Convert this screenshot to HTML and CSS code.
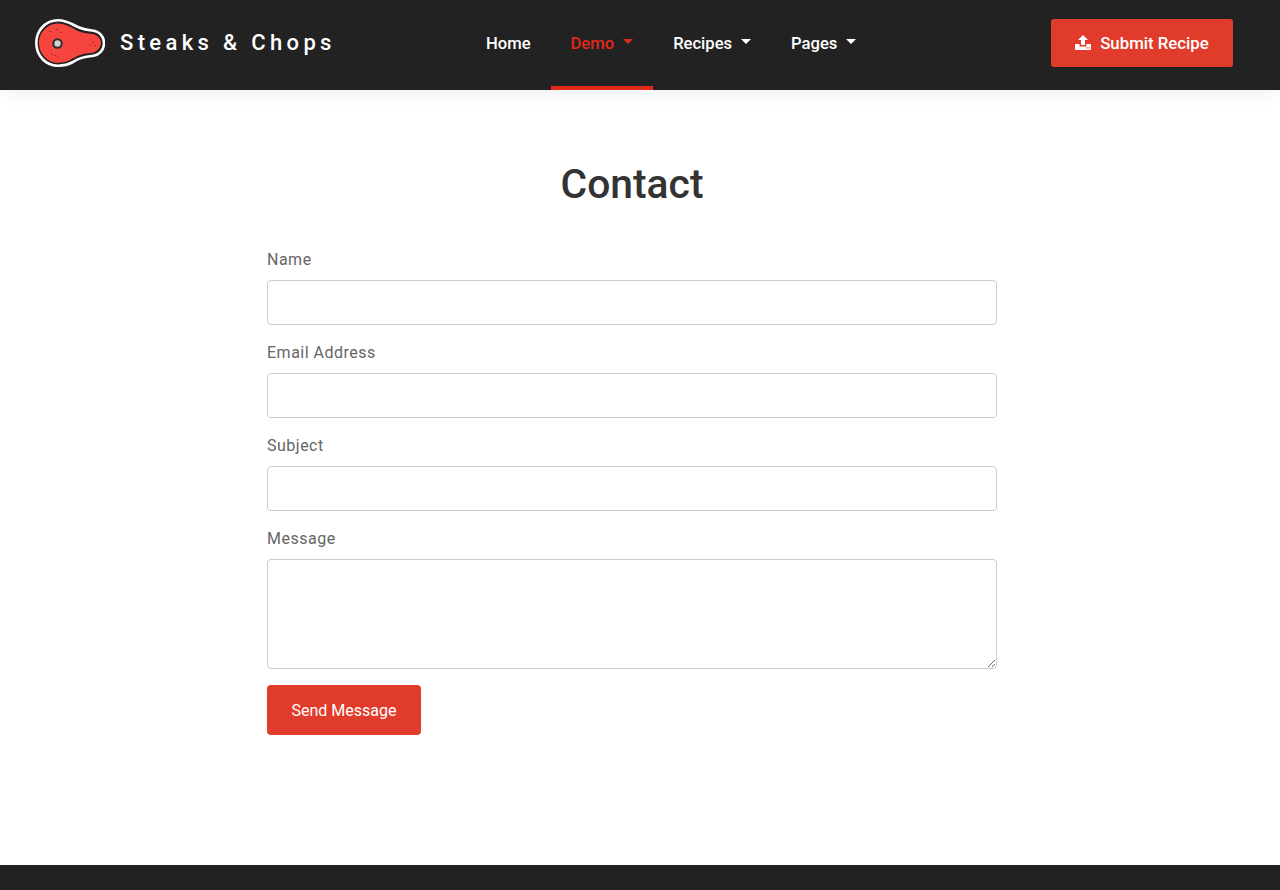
FILE: index.html
```html
<!DOCTYPE html>
<html lang="en">
<head>
<meta charset="utf-8">
<title>Contact - Steaks &amp; Chops</title>
<link rel="stylesheet" href="styles.css">
</head>
<body>
<header class="site-header">
  <a class="brand" href="#">
    <svg class="brand-logo" viewBox="0 0 70 48" width="70" height="48" aria-hidden="true">
      <path class="logo-outer" d="M1.300 24C1.300 11 11 1.300 23 1.300C32 1.300 37 5.500 44 8.500C48 10.200 52 11 57 11.500C65 12.300 69 18 69 24C69 31 64 36.500 57 37C50 37.500 44 39 38 43C33 45.700 28 46.700 23 46.700C11 46.700 1.300 37 1.300 24Z"/>
      <path class="logo-meat" d="M4 24C4 13 13 4.500 23 4.500C31 4.500 36 8.500 43 12C47 14 52 14.500 57 15C62 15.500 66 19.500 66 24C66 29 61 33.500 56 34C49 34.500 43 36 36 40.500C32 42.800 28 43.800 23 43.800C13 43.800 4 35 4 24Z"/>
      <circle class="logo-bone" cx="22.500" cy="24.500" r="4.200"/>
      <g class="logo-dots">
        <circle cx="15" cy="12.500" r=".6"/><circle cx="22" cy="10.500" r=".6"/><circle cx="26" cy="13.500" r=".6"/>
        <circle cx="17" cy="35" r=".6"/><circle cx="20" cy="36.500" r=".6"/><circle cx="23" cy="38" r=".6"/>
        <circle cx="58" cy="23" r=".6"/><circle cx="55" cy="26" r=".6"/><circle cx="60" cy="26.500" r=".6"/>
      </g>
    </svg>
    <span class="brand-name">Steaks &amp; Chops</span>
  </a>
  <nav class="main-nav">
    <a class="nav-link" href="#">Home</a>
    <a class="nav-link is-active has-caret" href="#">Demo</a>
    <a class="nav-link has-caret" href="#">Recipes</a>
    <a class="nav-link has-caret" href="#">Pages</a>
  </nav>
  <a class="submit-btn" href="#">
    <svg class="submit-icon" viewBox="0 0 16 15" width="16" height="15" aria-hidden="true">
      <path d="M8 0L13 5H10V10H6V5H3Z"/>
      <path fill-rule="evenodd" d="M1 9H4.500V11.500H11.500V9H15C15.600 9 16 9.400 16 10V14C16 14.600 15.600 15 15 15H1C.4 15 0 14.600 0 14V10C0 9.400 .4 9 1 9ZM11.500 12.300H12.700V13.500H11.500ZM13.500 12.300H14.700V13.500H13.500Z"/>
    </svg>
    Submit Recipe
  </a>
</header>

<main class="content">
  <h1 class="page-title">Contact</h1>
  <form class="contact-form">
    <div class="field">
      <label class="field-label" for="name">Name</label>
      <input class="field-input" id="name" type="text">
    </div>
    <div class="field">
      <label class="field-label" for="email">Email Address</label>
      <input class="field-input" id="email" type="text">
    </div>
    <div class="field">
      <label class="field-label" for="subject">Subject</label>
      <input class="field-input" id="subject" type="text">
    </div>
    <div class="field">
      <label class="field-label" for="message">Message</label>
      <textarea class="field-input field-textarea" id="message"></textarea>
    </div>
    <button class="send-btn" type="button">Send Message</button>
  </form>
</main>

<footer class="site-footer"></footer>
</body>
</html>
```

FILE: styles.css
```css
* {
  box-sizing: border-box;
}

html,
body {
  height: 100%;
}

body {
  margin: 0;
  display: flex;
  flex-direction: column;
  background: #fff;
  font-family: Roboto, "Liberation Sans", sans-serif;
  overflow: hidden;
}

a {
  text-decoration: none;
}

.site-header {
  position: relative;
  display: flex;
  align-items: center;
  flex: 0 0 90px;
  padding: 0 47px 0 35px;
  background: #222;
  box-shadow: 0 4px 16px rgba(0, 0, 0, .06);
}

.brand {
  display: flex;
  align-items: center;
  gap: 15px;
  flex: 0 0 431px;
  margin-top: -4px;
}

.brand-logo {
  display: block;
}

.logo-outer {
  fill: #222;
  stroke: #fff;
  stroke-width: 2.600;
}

.logo-meat {
  fill: #f6443f;
}

.logo-bone {
  fill: #d0d0d0;
  stroke: #2a2a2a;
  stroke-width: 2;
}

.logo-dots {
  fill: #5a1815;
}

.brand-name {
  margin-top: -2px;
  color: #fff;
  font-size: 22px;
  font-weight: 500;
  letter-spacing: 4.350px;
  white-space: nowrap;
}

.main-nav {
  display: flex;
  align-self: stretch;
}

.nav-link {
  position: relative;
  display: flex;
  align-items: center;
  height: 90px;
  padding: 0 20px 4px;
  color: #fff;
  font-size: 16.600px;
  font-weight: 500;
}

.has-caret::after {
  content: "";
  width: 0;
  height: 0;
  margin: -3px 0 0 9px;
  border-top: 5px solid currentColor;
  border-left: 5px solid transparent;
  border-right: 5px solid transparent;
}

.is-active {
  color: #e0281c;
  box-shadow: inset 0 -4px 0 #e0281c;
}

.submit-btn {
  display: flex;
  align-items: center;
  justify-content: center;
  gap: 9px;
  width: 182px;
  height: 48px;
  margin-left: auto;
  margin-top: -4px;
  border-radius: 3px;
  background: #e13b2b;
  color: #fff;
  font-size: 16.800px;
  font-weight: 500;
}

.submit-icon {
  display: block;
  fill: #fff;
  margin-top: -2px;
}

.content {
  flex: 1 1 auto;
  width: 730px;
  margin-left: 267px;
}

.page-title {
  margin: 71px 0 0;
  color: #333;
  font-size: 40.800px;
  font-weight: 500;
  line-height: 47px;
  text-align: center;
}

.contact-form {
  display: flex;
  flex-direction: column;
  align-items: flex-start;
  margin-top: 40px;
}

.field {
  width: 100%;
  margin-bottom: 16px;
}

.field-label {
  display: block;
  height: 32px;
  color: #666;
  font-size: 16px;
  line-height: 24px;
  letter-spacing: .5px;
}

.field-input {
  display: block;
  width: 100%;
  height: 45px;
  padding: 6px 12px;
  border: 1px solid #ccc;
  border-radius: 4px;
  background: #fff;
  font: inherit;
}

.field-textarea {
  height: 110px;
}

.send-btn {
  width: 154px;
  height: 50px;
  padding: 0;
  border: 0;
  border-radius: 4px;
  background: #e13b2b;
  color: #fff;
  font-family: inherit;
  font-size: 16px;
}

.site-footer {
  flex: 0 0 25px;
  background: #222;
}
```
